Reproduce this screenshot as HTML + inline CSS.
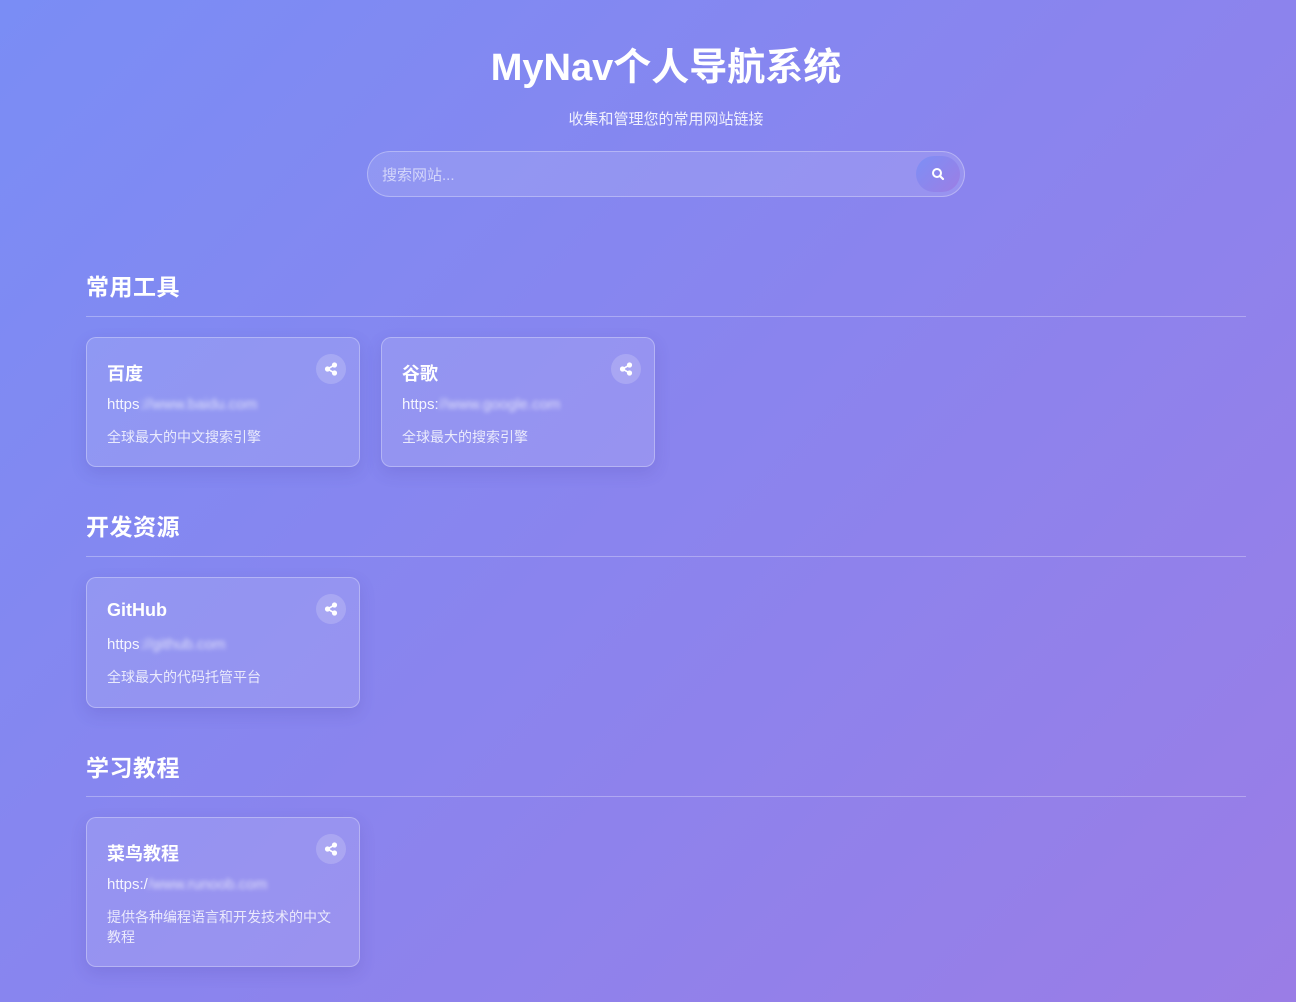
<!DOCTYPE html>
<html><head><meta charset="utf-8"><style>
*{margin:0;padding:0;box-sizing:border-box}
html,body{width:1296px;height:1002px;overflow:hidden}
body{background:linear-gradient(135deg,#7a8df5 0%,#8a84ee 50%,#9a7de6 100%);font-family:"Liberation Sans","Noto Sans CJK SC",sans-serif;color:#fff;position:relative}
.a{position:absolute}
h1{position:absolute;left:36px;width:1260px;top:44px;text-align:center;font-size:38px;font-weight:bold;line-height:48px}
.sub{left:36px;width:1260px;top:108px;text-align:center;font-size:15px;color:rgba(255,255,255,.88)}
.search{left:367px;top:151px;width:598px;height:46px;border-radius:23px;background:rgba(255,255,255,.12);border:1px solid rgba(255,255,255,.3)}
.search span{position:absolute;left:14px;top:12px;font-size:15px;color:rgba(255,255,255,.6)}
.btn{position:absolute;right:4px;top:4px;width:44px;height:36px;border-radius:18px;background:linear-gradient(135deg,#7d8ff6,#9c7ee4)}
.h{left:86px;font-size:23px;font-weight:bold;line-height:30px;letter-spacing:0.5px}
.line{left:86px;width:1160px;height:1px;background:rgba(255,255,255,.3)}
.card{width:274px;border-radius:10px;background:rgba(255,255,255,.12);border:1px solid rgba(255,255,255,.3);box-shadow:0 6px 16px rgba(60,50,150,.15)}
.card .t{position:absolute;left:20px;top:22px;font-size:18px;font-weight:bold}
.card .u{position:absolute;left:20px;top:58px;font-size:15px;color:rgba(255,255,255,.9)}
.card .u i{font-style:normal;filter:blur(2px);opacity:.8}
.card .d{position:absolute;left:20px;top:89px;width:232px;font-size:14px;line-height:20px;color:rgba(255,255,255,.8)}
.sh{position:absolute;left:229px;top:16px;width:30px;height:30px;border-radius:15px;background:rgba(255,255,255,.18)}
</style></head><body>
<h1>MyNav个人导航系统</h1>
<div class="a sub">收集和管理您的常用网站链接</div>
<div class="a search"><span>搜索网站...</span><div class="btn"><svg width="44" height="36" viewBox="0 0 44 36"><circle cx="21" cy="17" r="4" fill="none" stroke="#fff" stroke-width="2"/><line x1="24" y1="20" x2="27" y2="23" stroke="#fff" stroke-width="2.2" stroke-linecap="round"/></svg></div></div>

<div class="a h" style="top:272px">常用工具</div>
<div class="a line" style="top:316px"></div>
<div class="a card" style="left:86px;top:337px;height:130px"><div class="t">百度</div><div class="u">https<i>://www.baidu.com</i></div><div class="d">全球最大的中文搜索引擎</div><div class="sh"><svg width="30" height="30" viewBox="0 0 30 30"><g fill="#fff"><circle cx="18.5" cy="11" r="2.6"/><circle cx="18.5" cy="19" r="2.6"/><circle cx="11.5" cy="15" r="2.6"/></g><path d="M18.5 11L11.5 15L18.5 19" stroke="#fff" stroke-width="1.6" fill="none"/></svg></div></div>
<div class="a card" style="left:381px;top:337px;height:130px"><div class="t">谷歌</div><div class="u">https:<i>//www.google.com</i></div><div class="d">全球最大的搜索引擎</div><div class="sh"><svg width="30" height="30" viewBox="0 0 30 30"><g fill="#fff"><circle cx="18.5" cy="11" r="2.6"/><circle cx="18.5" cy="19" r="2.6"/><circle cx="11.5" cy="15" r="2.6"/></g><path d="M18.5 11L11.5 15L18.5 19" stroke="#fff" stroke-width="1.6" fill="none"/></svg></div></div>

<div class="a h" style="top:512px">开发资源</div>
<div class="a line" style="top:556px"></div>
<div class="a card" style="left:86px;top:577px;height:131px"><div class="t">GitHub</div><div class="u">https<i>://github.com</i></div><div class="d">全球最大的代码托管平台</div><div class="sh"><svg width="30" height="30" viewBox="0 0 30 30"><g fill="#fff"><circle cx="18.5" cy="11" r="2.6"/><circle cx="18.5" cy="19" r="2.6"/><circle cx="11.5" cy="15" r="2.6"/></g><path d="M18.5 11L11.5 15L18.5 19" stroke="#fff" stroke-width="1.6" fill="none"/></svg></div></div>

<div class="a h" style="top:753px">学习教程</div>
<div class="a line" style="top:796px"></div>
<div class="a card" style="left:86px;top:817px;height:150px"><div class="t">菜鸟教程</div><div class="u">https:/<i>/www.runoob.com</i></div><div class="d">提供各种编程语言和开发技术的中文教程</div><div class="sh"><svg width="30" height="30" viewBox="0 0 30 30"><g fill="#fff"><circle cx="18.5" cy="11" r="2.6"/><circle cx="18.5" cy="19" r="2.6"/><circle cx="11.5" cy="15" r="2.6"/></g><path d="M18.5 11L11.5 15L18.5 19" stroke="#fff" stroke-width="1.6" fill="none"/></svg></div></div>
</body></html>
